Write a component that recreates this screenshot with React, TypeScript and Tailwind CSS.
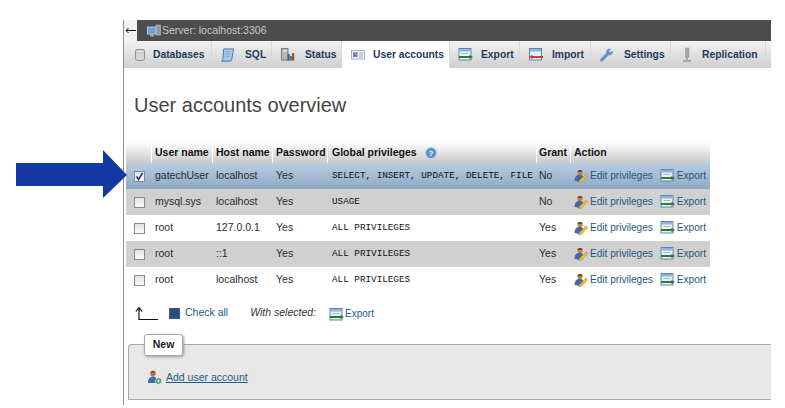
import React from "react";

const DbIcon = () => (
  <svg width="14" height="14" viewBox="0 0 14 14">
    <rect x="2.5" y="1.5" width="9" height="11" rx="2" fill="#d6d6d6" stroke="#8a8a8a" />
    <ellipse cx="7" cy="3.5" rx="4" ry="1.6" fill="#eee" stroke="#9a9a9a" strokeWidth="0.6" />
  </svg>
);
const SqlIcon = () => (
  <svg width="16" height="16" viewBox="0 0 16 16">
    <path d="M4 1.5h10.5L12.5 13c-.3 1.3-1 1.6-2 1.6H1.5c1 0 1.4-.6 1.5-1.6z" fill="#a9c8ea" stroke="#3f76ad" />
    <path d="M5.5 4.5h6M5 7h6M4.8 9.5h5.6" stroke="#6d9ccb" strokeWidth="0.7" />
  </svg>
);
const StatusIcon = () => (
  <svg width="16" height="15" viewBox="0 0 16 15">
    <rect x="1.5" y="1" width="7" height="12.5" fill="#b5b5b5" stroke="#777" />
    <rect x="3" y="3" width="4" height="1.5" fill="#ececec" />
    <rect x="8" y="7" width="2.4" height="7" fill="#2f62b8" />
    <rect x="10.4" y="9" width="2.4" height="5" fill="#3d9a3d" />
    <rect x="12.8" y="6" width="2.4" height="8" fill="#c83a2c" />
  </svg>
);
const UsersIcon = () => (
  <svg width="14" height="11" viewBox="0 0 14 11">
    <rect x="0.5" y="1.5" width="13" height="8.5" fill="#f4f6fa" stroke="#a8b0c0" />
    <rect x="2" y="3" width="4.5" height="5" fill="#5a7fbf" />
    <rect x="3.2" y="3.4" width="2" height="2" fill="#e0a860" />
    <path d="M8 4h4M8 6h4M8 8h4" stroke="#98a2b8" />
  </svg>
);
const ExportIcon = () => (
  <svg width="15" height="13" viewBox="0 0 15 13" className="shrink-0">
    <rect x="1" y="0.5" width="12" height="11.5" fill="#e8f0f8" stroke="#5c86b4" />
    <rect x="1.5" y="1" width="11" height="2.5" fill="#8fb2d8" />
    <path d="M3.5 5.5h7" stroke="#a8bccc" />
    <path d="M1 9h11" stroke="#2f7d2f" strokeWidth="2" />
    <path d="M11.5 6.8 15 9l-3.5 2.2z" fill="#2f7d2f" />
  </svg>
);
const ImportIcon = () => (
  <svg width="15" height="13" viewBox="0 0 15 13">
    <rect x="1.5" y="0.5" width="12" height="11.5" fill="#e8f0f8" stroke="#5c86b4" />
    <rect x="2" y="1" width="11" height="2.5" fill="#8fb2d8" />
    <path d="M4 9h11" stroke="#d23a2e" strokeWidth="2" />
    <path d="M4.5 6.8 1 9l3.5 2.2z" fill="#d23a2e" />
  </svg>
);
const WrenchIcon = () => (
  <svg width="16" height="16" viewBox="0 0 16 16">
    <path d="M2 14.5c-1-1-.8-1.8 0-2.6l6-6c-.5-2 .7-4.3 3.5-4.5l1 .3L10.5 4 12 5.5l2.300-2 .3 1c-.2 2.700-2.500 4-4.500 3.500l-6 6.200c-.8.800-1.400 1-2.100.800z" fill="#5a8fd0" stroke="#8e9cab" strokeWidth="0.6" />
  </svg>
);
const ReplIcon = () => (
  <svg width="12" height="16" viewBox="0 0 12 16">
    <rect x="4.5" y="1" width="3.5" height="9" fill="#a8a8a8" stroke="#8a8a8a" strokeWidth="0.5" />
    <path d="M6 10v3" stroke="#777" />
    <path d="M2 14h8" stroke="#999" strokeWidth="1.5" />
  </svg>
);
const ServerIcon = () => (
  <svg width="14" height="14" viewBox="0 0 14 14">
    <rect x="0.5" y="3" width="8.5" height="7" fill="#6f9dd0" stroke="#b5c8dc" />
    <rect x="3" y="10.5" width="4" height="2" fill="#9ab0c6" />
    <rect x="9" y="1" width="4.5" height="10" fill="#8d9aa8" stroke="#bcc6d0" strokeWidth="0.6" />
  </svg>
);
const EditIcon = () => (
  <svg width="14" height="14" viewBox="0 0 14 14" className="shrink-0">
    <circle cx="6" cy="3.5" r="2.6" fill="#c9803f" />
    <path d="M3.3 3C3.800.6 7.800.2 8.800 2.600z" fill="#6b3318" />
    <path d="M.5 12c0-4 2-6.300 5-6.300 2.500 0 3.500 1.300 4 2.800L6 13z" fill="#3f69b0" />
    <path d="M5.500 11.500 12 5l1.800 1.600-6.300 6.700-2.700.6z" fill="#efbb2c" stroke="#b58818" strokeWidth="0.5" />
  </svg>
);
const AddUserIcon = () => (
  <svg width="15" height="15" viewBox="0 0 15 15" className="shrink-0">
    <circle cx="6" cy="3.5" r="2.8" fill="#b8754a" />
    <path d="M3.5 2.500C4.500.5 7.500.5 8.500 2.500z" fill="#7a3a22" />
    <path d="M1 13c0-4 2-6.500 5-6.500s5 2.500 5 6.500z" fill="#3c6cb4" />
    <circle cx="11.5" cy="11" r="3.2" fill="#3a9a4a" stroke="#fff" strokeWidth="0.6" />
    <path d="M9.800 11h3.400M11.500 9.300v3.400" stroke="#fff" strokeWidth="1" />
  </svg>
);

const tabs: [string, React.ReactNode, number, number][] = [
  ["Databases", <DbIcon />, 88, 6],
  ["SQL", <SqlIcon />, 60, 10],
  ["Status", <StatusIcon />, 70, 10],
  ["User accounts", <UsersIcon />, 108, 8],
  ["Export", <ExportIcon />, 70, 8],
  ["Import", <ImportIcon />, 71, 9],
  ["Settings", <WrenchIcon />, 80, 10],
  ["Replication", <ReplIcon />, 95, 8],
];

const rows = [
  { user: "gatechUser", host: "localhost", priv: "SELECT, INSERT, UPDATE, DELETE, FILE", grant: "No", cls: "bg-[linear-gradient(#b9cde0,#8fa9c4)]", checked: true },
  { user: "mysql.sys", host: "localhost", priv: "USAGE", grant: "No", cls: "bg-[#d0d0d0]" },
  { user: "root", host: "127.0.0.1", priv: "ALL PRIVILEGES", grant: "Yes", cls: "bg-white" },
  { user: "root", host: "::1", priv: "ALL PRIVILEGES", grant: "Yes", cls: "bg-[#d0d0d0]" },
  { user: "root", host: "localhost", priv: "ALL PRIVILEGES", grant: "Yes", cls: "bg-white" },
];

const Check = ({ checked }: { checked?: boolean }) => (
  <span className="flex h-[11px] w-[11px] items-center justify-center border border-[#8a8a8a] bg-[linear-gradient(#e2e2e2,#fbfbfb)]">
    {checked && (
      <svg width="9" height="9" viewBox="0 0 9 9">
        <path d="M1.5 4.5 3.5 7.5 7.5 1" fill="none" stroke="#1c2f9c" strokeWidth="1.5" />
      </svg>
    )}
  </span>
);

const cols = "grid grid-cols-[25px_61px_60px_55px_209px_34px_140px]";
const headers = ["", "User name", "Host name", "Password", "Global privileges", "Grant", "Action"];
const headerPad = ["pl-[4px]", "pl-[3px]", "pl-[3px]", "pl-[3px]", "pl-[4px]", "pl-[2px]", "pl-[3px]"];

export default function App() {
  return (
    <div className="relative h-[408px] w-[785px] overflow-hidden bg-white pl-[123px] pt-5 font-['Liberation_Sans',Arial,sans-serif] text-[10.5px] text-[#2b2b2b]">
      {/* Annotation arrow */}
      <svg className="absolute left-[16px] top-[150px]" width="112" height="49" viewBox="0 0 112 49">
        <path d="M0 13H87V0L111 25 87 48V36H0z" fill="#1338a4" />
      </svg>

      <div className="h-[385px] w-[648px] border-l border-[#8f8f8f]">
        {/* Server bar */}
        <div className="flex h-[21px] items-center bg-[#4d4d4d]">
          <div className="flex h-full w-[13px] items-center justify-center bg-[#f2f2f2]">
            <svg width="11" height="7" viewBox="0 0 11 7">
              <path d="M1 3.5h10M3.5 1 1 3.500 3.500 6" fill="none" stroke="#111" />
            </svg>
          </div>
          <div className="ml-[10px] flex items-center gap-px text-[#c9c9c9]">
            <ServerIcon />
            <span className="text-[10.5px]">Server: localhost:3306</span>
          </div>
        </div>

        {/* Tabs */}
        <div className="flex h-[27px] bg-[linear-gradient(#f2f2f2,#cfcfcf)]">
          {tabs.map(([label, icon, w, gap], i) => (
            <div
              key={label}
              style={{ width: w, gap }}
              className={`flex shrink-0 items-center whitespace-nowrap border-r border-[#d8d8d8] pl-[8px] text-[10.3px] font-bold text-[#1e3a5c] ${i === 3 ? "bg-white" : ""}`}
            >
              <span className="flex w-[15px] justify-center">{icon}</span>
              <span>{label}</span>
            </div>
          ))}
        </div>

        {/* Title */}
        <h1 className="ml-[10px] mt-[25px] text-[20px] font-normal leading-[24px] text-[#444]">User accounts overview</h1>

        {/* Table */}
        <div className="ml-[2px] mt-[25px] w-[584px]">
          <div className={`${cols} h-[21px] bg-[linear-gradient(#ffffff,#c9c9c9)] font-bold text-[#111]`}>
            {headers.map((h, i) => (
              <div key={i} className={`flex items-center whitespace-nowrap ${headerPad[i]} ${i > 0 ? "border-l border-white" : ""}`}>
                {h}
                {i === 4 && (
                  <svg className="ml-[8px]" width="12" height="12" viewBox="0 0 12 12">
                    <circle cx="6" cy="6" r="5.5" fill="#5b8fd0" stroke="#c0cfe0" />
                    <text x="6" y="9" textAnchor="middle" fontSize="8" fontWeight="bold" fill="#fff" fontFamily="Liberation Sans">?</text>
                  </svg>
                )}
              </div>
            ))}
          </div>
          {rows.map((r, i) => (
            <div key={i} className={`${cols} h-[26px] items-center ${r.cls}`}>
              <div className="flex justify-center pl-[1px]">
                <Check checked={r.checked} />
              </div>
              <div className="pl-[4px]">{r.user}</div>
              <div className="pl-[4px]">{r.host}</div>
              <div className="pl-[4px]">Yes</div>
              <div className="whitespace-nowrap pl-[5px] font-['Liberation_Mono',monospace] text-[9.3px] text-[#111]">{r.priv}</div>
              <div className="pl-[3px]">{r.grant}</div>
              <div className="flex items-center whitespace-nowrap pl-[4px] text-[10.1px] text-[#235a81]">
                <EditIcon />
                <span className="ml-[2px]">Edit privileges</span>
                <span className="ml-[7px]"><ExportIcon /></span>
                <span className="ml-[2px]">Export</span>
              </div>
            </div>
          ))}
        </div>

        {/* With selected */}
        <div className="ml-[11px] mt-[12px] flex h-[16px] items-center">
          <svg width="24" height="15" viewBox="0 0 24 15">
            <path d="M4 14V3M1 5.5 4 1.500l3 4M4 13.500h19" fill="none" stroke="#111" strokeWidth="1.2" />
          </svg>
          <span className="ml-[10px] h-[11px] w-[11px] border border-[#555] bg-[#1f4f8f]" />
          <span className="ml-[5px] text-[#235a81]">Check all</span>
          <span className="ml-[22px] italic text-[#333]">With selected:</span>
          <span className="ml-[13px] mt-[2px]"><ExportIcon /></span>
          <span className="ml-[1px] mt-[1px] text-[10px] text-[#235a81]">Export</span>
        </div>

        {/* New fieldset */}
        <div className="relative ml-[4px] mt-[23px] h-[56px] rounded-tl-[4px] border border-r-0 border-[#aaa] bg-[#e8e8e8]">
          <div className="absolute left-[15px] top-[-11px] flex h-[22px] w-[39px] items-center justify-center rounded-[3px] border border-[#aaa] bg-white font-bold text-[#222] shadow-[1px_1px_3px_#999]">New</div>
          <div className="absolute left-[18px] top-[25px] flex items-center gap-[4px]">
            <AddUserIcon />
            <span className="text-[#235a81] underline">Add user account</span>
          </div>
        </div>
      </div>
    </div>
  );
}
